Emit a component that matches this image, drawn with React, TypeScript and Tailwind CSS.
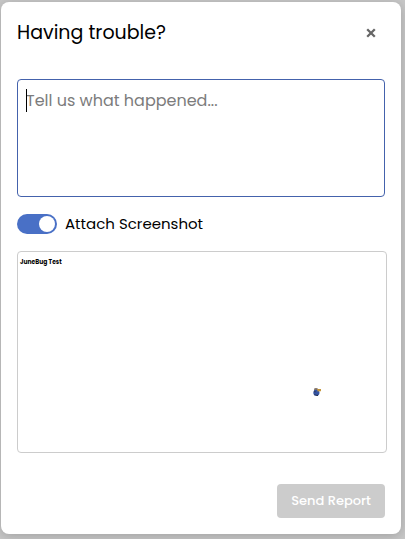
import { useState } from "react";

function BugIcon() {
  return (
    <svg viewBox="0 0 8 8" className="h-2 w-2" aria-hidden="true">
      <path d="M1.4 0h3.2v1.6H1.4z" fill="#8d8178" />
      <path d="M1 1.4h4v1.4H1z" fill="#5b4b45" />
      <circle cx="3.4" cy="4.8" r="3.1" fill="#3454a4" />
      <path d="M1.2 3.2h1.4v1H1.2zM1.4 6.2h1.2v1H1.4zM3.4 6.8h1.6V8H3.4z" fill="#2b3346" />
      <path d="M4 1h4v2.2H6.6L4.6 3.6z" fill="#c5963c" />
    </svg>
  );
}

export default function App() {
  const [message, setMessage] = useState("");
  const [attach, setAttach] = useState(true);

  return (
    <div className="min-h-screen bg-[#c8c8c8] pt-0.5 pr-1 pb-[5px] pl-px font-['Poppins','Inter',sans-serif] text-black">
      <form
        className="flex flex-col rounded-lg bg-white p-4 shadow-[0_2px_12px_rgba(0,0,0,0.2)]"
        onSubmit={(e) => e.preventDefault()}
      >
        <header className="flex h-[30px] items-center justify-between">
          <h1 className="text-[19px] leading-7">Having trouble?</h1>
          <button type="button" aria-label="Close" className="flex h-7 w-7 items-center justify-center">
            <svg viewBox="0 0 10 10" className="h-2.5 w-2.5" aria-hidden="true">
              <path d="M1.2 1.2l7.6 7.6M8.8 1.2L1.2 8.8" stroke="#666666" strokeWidth="2.3" />
            </svg>
          </button>
        </header>

        <div className="relative mt-[31px] flex">
          <textarea
            aria-label="Tell us what happened"
            placeholder="Tell us what happened..."
            value={message}
            onChange={(e) => setMessage(e.target.value)}
            className="peer h-[118px] w-full resize-none rounded border border-[#4462ac] bg-white px-2 py-[9px] text-base leading-6 outline-none placeholder:text-[#7c7c7c]"
          />
          {message === "" && (
            <span className="pointer-events-none absolute top-2.5 left-[9px] h-[23px] w-px bg-black peer-focus:hidden" />
          )}
        </div>

        <label className="mt-[17px] flex h-5 items-center gap-2 text-[15px]">
          <input
            type="checkbox"
            role="switch"
            checked={attach}
            onChange={(e) => setAttach(e.target.checked)}
            className="flex h-5 w-10 shrink-0 appearance-none items-center rounded-full bg-[#cccccc] p-0.5 before:h-4 before:w-4 before:rounded-full before:bg-white checked:justify-end checked:bg-[#4970c6]"
          />
          Attach Screenshot
        </label>

        <figure
          aria-label="Screenshot preview"
          className="relative mt-[17px] -mr-0.5 h-[202px] rounded border border-[#cccccc] px-0.5 py-1.5"
        >
          <p className="text-[6px] leading-2 font-bold">JuneBug Test</p>
          <span className="absolute right-[65px] bottom-14">
            <BugIcon />
          </span>
        </figure>

        <button
          type="submit"
          disabled={message === ""}
          className="mt-[31px] h-[34px] w-27 self-end rounded bg-[#4970c6] text-[13px] font-medium text-white disabled:bg-[#cccccc]"
        >
          Send Report
        </button>
      </form>
    </div>
  );
}
